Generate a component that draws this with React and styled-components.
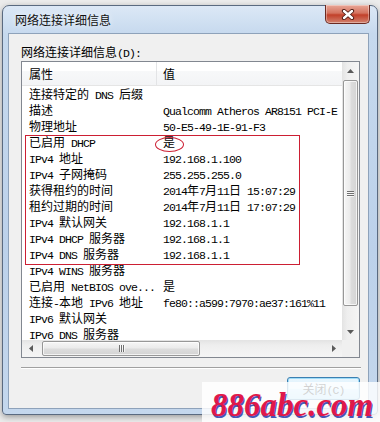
import React from 'react';
import styled, { createGlobalStyle } from 'styled-components';

const Global = createGlobalStyle`
  html, body { margin: 0; padding: 0; }
  body {
    background: #ececec;
    width: 380px;
    height: 422px;
    overflow: hidden;
    font-family: "Noto Sans CJK SC", "Noto Sans", sans-serif;
    color: #000;
  }
`;

const Page = styled.div`
  position: relative;
  width: 380px;
  height: 422px;
  box-sizing: border-box;
  padding: 5px 2px 0 2px;
`;

const Window = styled.div`
  width: 376px;
  height: 410px;
  box-sizing: border-box;
  border: 1px solid #5a6a80;
  border-radius: 7px 7px 4px 4px;
  background: linear-gradient(to bottom, #dce8f6 0px, #c6d9ee 28px, #bcd1ea 60%, #c4d7ed 100%);
  box-shadow: 0 2px 6px rgba(0, 0, 0, 0.35);
  padding: 0 8px 5px 5px;
  display: flex;
  flex-direction: column;
`;

const TitleBar = styled.div`
  height: 27px;
  flex: none;
  display: flex;
  align-items: center;
  padding-left: 7px;
`;

const TitleText = styled.span`
  font-size: 12px;
  line-height: 16px;
  color: #101010;
  text-shadow: 0 0 6px rgba(255, 255, 255, 0.9);
`;

const CloseButton = styled.div`
  margin-left: auto;
  margin-right: -1px;
  align-self: flex-start;
  margin-top: -1px;
  width: 45px;
  height: 19px;
  box-sizing: border-box;
  border: 1px solid #6b2a22;
  border-top: none;
  border-radius: 0 0 5px 5px;
  background: linear-gradient(to bottom, #e9a797 0%, #d4735f 45%, #c2402a 55%, #d2826f 100%);
  box-shadow: inset 0 0 0 1px rgba(255, 255, 255, 0.35);
  display: flex;
  align-items: center;
  justify-content: center;
`;

const Client = styled.div`
  flex: 1;
  box-sizing: border-box;
  border: 1px solid #8ea2ba;
  background: #f0f0f0;
  padding: 10px 8px 0 12px;
  display: flex;
  flex-direction: column;
`;

const Label = styled.div`
  font-size: 12px;
  line-height: 16px;
  height: 17px;
  white-space: nowrap;
`;

const ListBox = styled.div`
  height: 297px;
  box-sizing: border-box;
  border: 1px solid #828790;
  background: #fff;
  display: grid;
  grid-template-columns: 1fr 17px;
  grid-template-rows: 1fr 17px;
`;

const Viewport = styled.div`
  overflow: hidden;
  min-width: 0;
  min-height: 0;
`;

const HeaderRow = styled.div`
  display: grid;
  grid-template-columns: 135px 1fr;
  height: 24px;
  box-sizing: border-box;
  border-bottom: 1px solid #e5e5e5;
  background: linear-gradient(to bottom, #ffffff 0%, #ffffff 40%, #f7f8f9 41%, #f3f4f6 100%);
`;

const HeaderCell = styled.div`
  font-size: 12px;
  line-height: 23px;
  padding-left: ${(p) => (p.$first ? '7px' : '6px')};
  border-right: ${(p) => (p.$first ? '1px solid #e3e4e6' : 'none')};
  box-sizing: border-box;
`;

const Row = styled.div`
  display: grid;
  grid-template-columns: 135px 1fr;
  height: 16px;
`;

const Cell = styled.div`
  font-size: 12px;
  line-height: 16px;
  white-space: nowrap;
  overflow: hidden;
  padding-left: ${(p) => (p.$first ? '7px' : '6px')};
`;

const ValueCell = styled(Cell)`
  overflow: visible;
`;

const Latin = styled.span`
  font-family: "Liberation Mono", monospace;
  font-size: 11.5px;
  letter-spacing: -0.9px;
  white-space: pre;
`;

const VScroll = styled.div`
  background: linear-gradient(to right, #e3e3e3 0%, #eeeeee 30%, #f5f5f5 100%);
  display: flex;
  flex-direction: column;
`;

const HScroll = styled.div`
  background: linear-gradient(to bottom, #e3e3e3 0%, #eeeeee 30%, #f5f5f5 100%);
  display: flex;
  flex-direction: row;
  align-items: stretch;
`;

const Corner = styled.div`
  background: #f0f0f0;
`;

const Arrow = styled.div`
  flex: none;
  width: 17px;
  height: 17px;
  display: flex;
  align-items: center;
  justify-content: center;
`;

const VThumb = styled.div`
  margin: 1px 1px 0 1px;
  height: 226px;
  box-sizing: border-box;
  border: 1px solid #979797;
  border-radius: 2px;
  background: linear-gradient(to right, #f6f6f6 0%, #ebebeb 45%, #dcdcdc 55%, #d4d4d4 100%);
  box-shadow: inset 0 0 0 1px rgba(255, 255, 255, 0.7);
  display: flex;
  align-items: center;
  justify-content: center;
`;

const HThumb = styled.div`
  margin: 1px 0 1px 3px;
  width: 158px;
  box-sizing: border-box;
  border: 1px solid #979797;
  border-radius: 2px;
  background: linear-gradient(to bottom, #f6f6f6 0%, #ebebeb 45%, #dcdcdc 55%, #d4d4d4 100%);
  box-shadow: inset 0 0 0 1px rgba(255, 255, 255, 0.7);
  display: flex;
  align-items: center;
  justify-content: center;
`;

const Spacer = styled.div`
  flex: 1;
`;

const Separator = styled.div`
  margin-top: 9px;
  margin-right: -1px;
  height: 1px;
  background: #a0a0a0;
  border-bottom: 1px solid #ffffff;
`;

const Footer = styled.div`
  display: flex;
  justify-content: flex-end;
  padding-top: 8px;
`;

const Button = styled.div`
  width: 73px;
  height: 23px;
  box-sizing: border-box;
  border: 1px solid #3c7fb1;
  border-radius: 3px;
  background: linear-gradient(to bottom, #eaf6fd 0%, #d9f0fc 50%, #bee6fd 51%, #a7d9f5 100%);
  box-shadow: inset 0 0 0 1px #9fdcf8;
  font-size: 12px;
  line-height: 21px;
  text-align: center;
`;

const Annotation = styled.div`
  position: absolute;
  left: 25px;
  top: 135px;
  width: 275px;
  height: 130px;
  box-sizing: border-box;
  border: 1px solid #cc1f33;
  pointer-events: none;
`;

const Ellipse = styled.div`
  position: absolute;
  left: 155px;
  top: 137px;
  width: 29px;
  height: 15px;
  box-sizing: border-box;
  border: 1px solid #cc1f33;
  border-radius: 50%;
  pointer-events: none;
`;

const Watermark = styled.div`
  position: absolute;
  left: 202px;
  top: 382px;
  width: 178px;
  height: 40px;
  box-sizing: border-box;
  background: rgba(255, 255, 255, 0.82);
  padding: 7px 0 0 9px;
  overflow: hidden;
`;

const WatermarkText = styled.div`
  font-family: "Liberation Serif", serif;
  font-style: italic;
  font-weight: bold;
  font-size: 33px;
  line-height: 33px;
  color: #e0184a;
  text-shadow: 1px 2px 0 rgba(40, 56, 170, 0.85);
  white-space: nowrap;
`;

const CJK_RE = /([\u2e80-\u9fff\uff00-\uffef]+)/;

function Mixed({ text }) {
  const parts = text.split(CJK_RE).filter((s) => s.length > 0);
  return (
    <>
      {parts.map((p, i) =>
        CJK_RE.test(p) ? <span key={i}>{p}</span> : <Latin key={i}>{p}</Latin>
      )}
    </>
  );
}

const rows = [
  ['连接特定的 DNS 后缀', ''],
  ['描述', 'Qualcomm Atheros AR8151 PCI-E Gigabit Ethernet Controller (NDIS 6.20)'],
  ['物理地址', '50-E5-49-1E-91-F3'],
  ['已启用 DHCP', '是'],
  ['IPv4 地址', '192.168.1.100'],
  ['IPv4 子网掩码', '255.255.255.0'],
  ['获得租约的时间', '2014年7月11日 15:07:29'],
  ['租约过期的时间', '2014年7月11日 17:07:29'],
  ['IPv4 默认网关', '192.168.1.1'],
  ['IPv4 DHCP 服务器', '192.168.1.1'],
  ['IPv4 DNS 服务器', '192.168.1.1'],
  ['IPv4 WINS 服务器', ''],
  ['已启用 NetBIOS ove...', '是'],
  ['连接-本地 IPv6 地址', 'fe80::a599:7970:ae37:161%11'],
  ['IPv6 默认网关', ''],
  ['IPv6 DNS 服务器', ''],
];

const Tri = ({ dir }) => {
  const pts = {
    up: '0,4 3.5,0 7,4',
    down: '0,0 7,0 3.5,4',
    left: '4,0 4,7 0,3.5',
    right: '0,0 0,7 4,3.5',
  }[dir];
  const vertical = dir === 'up' || dir === 'down';
  return (
    <svg width={vertical ? 7 : 4} height={vertical ? 4 : 7} viewBox={vertical ? '0 0 7 4' : '0 0 4 7'}>
      <polygon points={pts} fill="#5a5a5a" />
    </svg>
  );
};

const GripV = () => (
  <svg width="7" height="7" viewBox="0 0 7 7">
    {[0, 2, 4].map((y) => (
      <g key={y}>
        <rect x="0" y={y + 1} width="7" height="1" fill="#6f6f6f" />
        <rect x="0" y={y + 2} width="7" height="1" fill="#ffffff" opacity="0.7" />
      </g>
    ))}
  </svg>
);

const GripH = () => (
  <svg width="7" height="7" viewBox="0 0 7 7">
    {[0, 2, 4].map((x) => (
      <g key={x}>
        <rect x={x + 1} y="0" width="1" height="7" fill="#6f6f6f" />
        <rect x={x + 2} y="0" width="1" height="7" fill="#ffffff" opacity="0.7" />
      </g>
    ))}
  </svg>
);

const CloseX = () => (
  <svg width="14" height="11" viewBox="0 0 14 11">
    <path d="M3 2 L11 9 M11 2 L3 9" stroke="#4a1810" strokeWidth="4.2" strokeLinecap="round" />
    <path d="M3 2 L11 9 M11 2 L3 9" stroke="#ffffff" strokeWidth="2.4" strokeLinecap="round" />
  </svg>
);

export default function App() {
  return (
    <>
      <Global />
      <Page>
        <Window>
          <TitleBar>
            <TitleText>网络连接详细信息</TitleText>
            <CloseButton>
              <CloseX />
            </CloseButton>
          </TitleBar>
          <Client>
            <Label>
              <Mixed text="网络连接详细信息(D):" />
            </Label>
            <ListBox>
              <Viewport>
                <HeaderRow>
                  <HeaderCell $first>属性</HeaderCell>
                  <HeaderCell>值</HeaderCell>
                </HeaderRow>
                {rows.map(([k, v], i) => (
                  <Row key={i}>
                    <Cell $first>
                      <Mixed text={k} />
                    </Cell>
                    <ValueCell>
                      <Mixed text={v} />
                    </ValueCell>
                  </Row>
                ))}
              </Viewport>
              <VScroll>
                <Arrow>
                  <Tri dir="up" />
                </Arrow>
                <VThumb>
                  <GripV />
                </VThumb>
                <Spacer />
                <Arrow>
                  <Tri dir="down" />
                </Arrow>
              </VScroll>
              <HScroll>
                <Arrow>
                  <Tri dir="left" />
                </Arrow>
                <HThumb>
                  <GripH />
                </HThumb>
                <Spacer />
                <Arrow>
                  <Tri dir="right" />
                </Arrow>
              </HScroll>
              <Corner />
            </ListBox>
            <Separator />
            <Footer>
              <Button>
                <Mixed text="关闭(C)" />
              </Button>
            </Footer>
          </Client>
        </Window>
        <Annotation />
        <Ellipse />
        <Watermark>
          <WatermarkText>886abc.com</WatermarkText>
        </Watermark>
      </Page>
    </>
  );
}
